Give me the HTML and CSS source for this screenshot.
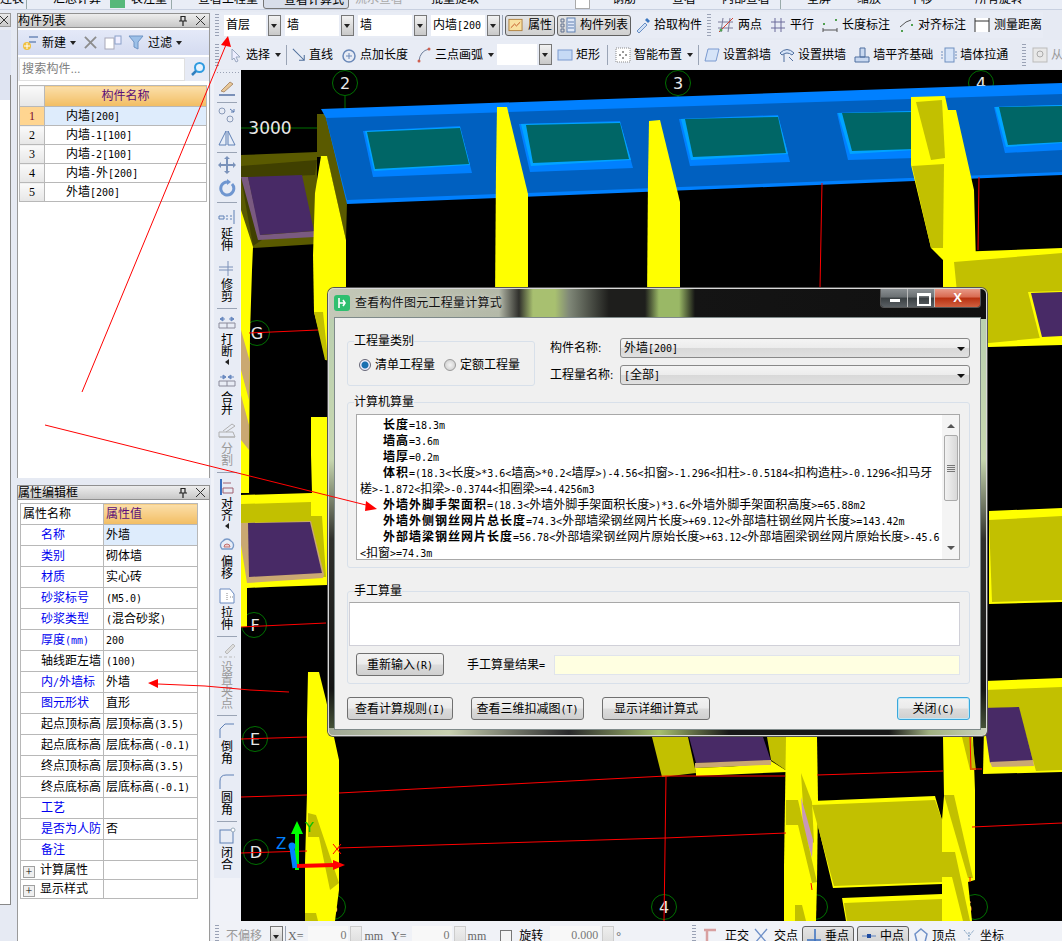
FILE: index.html
```html
<!DOCTYPE html>
<html lang="zh-CN">
<head>
<meta charset="utf-8">
<title>查看构件图元工程量计算式</title>
<link rel="stylesheet" href="styles.css">
</head>
<body>
<div class="app">
  <div class="topstrip">
    <span class="ts ts-a">连表</span><i class="ts-sep ts-s1"></i>
    <span class="ts ts-b">汇总计算</span>
    <svg class="ts-ico" width="17" height="14"><rect x="1" y="1" width="15" height="12" fill="#56b87a"/></svg>
    <span class="ts ts-c">表注量</span><i class="ts-sep ts-s2"></i>
    <span class="ts ts-d">查看工程量</span>
    <span class="ts ts-btn">查看计算式</span>
    <span class="ts ts-e">流水查看</span>
    <span class="ts ts-f">批量提取</span>
    <span class="ts-check"></span>
    <span class="ts ts-g">钢筋</span>
    <span class="ts ts-h">查看</span>
    <span class="ts ts-i">内部查看</span><i class="ts-sep ts-s3"></i>
    <span class="ts ts-j">全屏</span>
    <span class="ts ts-k">缩放</span>
    <span class="ts ts-l">平移</span>
    <span class="ts ts-m">所有旋转</span>
  </div>
  <div class="main">
    <div class="sliver">
      <div class="sliver-title"><svg width="8" height="8" viewBox="0 0 8 8"><path d="M0 0l8 8M8 0L0 8" stroke="#333"/></svg></div>
      <div class="sliver-tool"></div>
      <div class="sliver-body"></div>
    </div>
    <div class="leftcol">
      <section class="panel panel-list">
        <header class="ptitle"><span>构件列表</span><span class="ptitle-btns">
          <svg width="8" height="10" viewBox="0 0 8 10"><path d="M2 0v5M6 0v5M0 5h8M4 5v5" stroke="#222" stroke-width="1.2" fill="none"/><path d="M2 0h4" stroke="#222" stroke-width="2"/></svg>
          <svg width="9" height="9" viewBox="0 0 9 9"><path d="M0 0l9 9M9 0L0 9" stroke="#333"/></svg></span></header>
        <div class="ptool">
          <svg width="18" height="16" viewBox="0 0 18 16"><rect x="7" y="1" width="9" height="2" fill="#8aa0c8"/><rect x="7" y="6" width="7" height="2" fill="#8aa0c8"/><circle cx="5" cy="11" r="4" fill="#f0c040"/><path d="M2 11h6M5 8v6" stroke="#fff"/></svg>
          <span>新建</span><i class="caret"></i>
          <svg class="tool-x" width="13" height="13" viewBox="0 0 14 14"><path d="M1 1l12 12M13 1L1 13" stroke="#8d8d8d" stroke-width="2"/></svg>
          <svg class="tool-c" width="18" height="15" viewBox="0 0 18 15"><rect x="1" y="3" width="9" height="11" fill="#fff" stroke="#a8a8b8"/><rect x="11" y="1" width="6" height="8" fill="#eef" stroke="#8aa0c8"/></svg>
          <svg class="tool-f" width="16" height="15" viewBox="0 0 16 15"><path d="M1 1h14L10 7v7l-4-2V7z" fill="#9cc0e8" stroke="#6f94c4"/></svg>
          <span>过滤</span><i class="caret"></i>
        </div>
        <div class="psearch">
          <div class="search-input">搜索构件...</div>
          <svg width="16" height="16" viewBox="0 0 16 16"><circle cx="9.5" cy="6.5" r="4.5" fill="#e6f3ff" stroke="#2f9be0" stroke-width="2"/><path d="M6 10l-4 4" stroke="#2f7fc0" stroke-width="2.5"/></svg>
        </div>
        <table class="list">
          <tr class="hdr"><th class="num"></th><th class="lname">构件名称</th></tr>
          <tr class="sel"><td class="num">1</td><td class="nm">内墙<span class="m">[200]</span></td></tr>
          <tr><td class="num">2</td><td class="nm">内墙<span class="m">-1[100]</span></td></tr>
          <tr><td class="num">3</td><td class="nm">内墙<span class="m">-2[100]</span></td></tr>
          <tr><td class="num">4</td><td class="nm">内墙<span class="m">-</span>外<span class="m">[200]</span></td></tr>
          <tr><td class="num">5</td><td class="nm">外墙<span class="m">[200]</span></td></tr>
        </table>
      </section>
      <section class="panel panel-prop">
        <header class="ptitle"><span>属性编辑框</span><span class="ptitle-btns">
          <svg width="8" height="10" viewBox="0 0 8 10"><path d="M2 0v5M6 0v5M0 5h8M4 5v5" stroke="#222" stroke-width="1.2" fill="none"/><path d="M2 0h4" stroke="#222" stroke-width="2"/></svg>
          <svg width="9" height="9" viewBox="0 0 9 9"><path d="M0 0l9 9M9 0L0 9" stroke="#333"/></svg></span></header>
        <table class="prop">
          <tr class="hdr"><th class="pk0">属性名称</th><th class="pv0">属性值</th></tr>
          <tr class="sel"><td class="pk blue">名称</td><td class="pv">外墙</td></tr>
          <tr><td class="pk blue">类别</td><td class="pv">砌体墙</td></tr>
          <tr><td class="pk blue">材质</td><td class="pv">实心砖</td></tr>
          <tr><td class="pk blue">砂浆标号</td><td class="pv"><span class="m">(M5.0)</span></td></tr>
          <tr><td class="pk blue">砂浆类型</td><td class="pv"><span class="m">(</span>混合砂浆<span class="m">)</span></td></tr>
          <tr><td class="pk blue">厚度<span class="m">(mm)</span></td><td class="pv"><span class="m">200</span></td></tr>
          <tr><td class="pk">轴线距左墙</td><td class="pv"><span class="m">(100)</span></td></tr>
          <tr><td class="pk blue">内<span class="m">/</span>外墙标</td><td class="pv">外墙</td></tr>
          <tr><td class="pk blue">图元形状</td><td class="pv">直形</td></tr>
          <tr><td class="pk">起点顶标高</td><td class="pv">层顶标高<span class="m">(3.5)</span></td></tr>
          <tr><td class="pk">起点底标高</td><td class="pv">层底标高<span class="m">(-0.1)</span></td></tr>
          <tr><td class="pk">终点顶标高</td><td class="pv">层顶标高<span class="m">(3.5)</span></td></tr>
          <tr><td class="pk">终点底标高</td><td class="pv">层底标高<span class="m">(-0.1)</span></td></tr>
          <tr><td class="pk blue">工艺</td><td class="pv"></td></tr>
          <tr><td class="pk blue">是否为人防</td><td class="pv">否</td></tr>
          <tr><td class="pk blue">备注</td><td class="pv"></td></tr>
          <tr class="grp"><td class="pk"><i class="plus">+</i>计算属性</td><td class="pv"></td></tr>
          <tr class="grp"><td class="pk"><i class="plus">+</i>显示样式</td><td class="pv"></td></tr>
        </table>
      </section>
    </div>
    <div class="rightcol">
      <div class="tbrow tbrow1">
        <div class="tb tb1">
          <i class="grip"></i>
          <div class="combo c-a"><span>首层</span><i class="cbtn"></i></div>
          <div class="combo c-b"><span>墙</span><i class="cbtn"></i></div>
          <div class="combo c-b"><span>墙</span><i class="cbtn"></i></div>
          <div class="combo c-c"><span>内墙<b class="m">[200</b></span><i class="cbtn"></i></div>
          <i class="tsep"></i>
          <div class="tool on t-attr"><svg width="16" height="16" viewBox="0 0 16 16"><rect x="1" y="2" width="14" height="12" fill="#f8e0a0" stroke="#b08040"/><path d="M3 11l4-4 2 2 4-4" stroke="#c05020" fill="none"/></svg><span>属性</span></div>
          <div class="tool on t-list"><svg width="16" height="16" viewBox="0 0 16 16"><path d="M1 2h3v3H1zM1 7h3v3H1zM1 12h3v3H1z" fill="none" stroke="#607090"/><rect x="7" y="1" width="8" height="14" fill="#dfe8f8" stroke="#6080b0"/><path d="M8 5h6M8 8h6M8 11h6" stroke="#6080b0"/></svg><span>构件列表</span></div>
          <div class="tool t-pick"><svg width="16" height="16" viewBox="0 0 16 16"><path d="M2 14l8-8 2 2-8 8z" fill="#cfe0f5" stroke="#6a8fc5"/><path d="M10 3l3 3 2-2-3-3z" fill="#3a76c0"/></svg><span>拾取构件</span></div>
        </div>
        <div class="tb tb1b">
          <i class="grip"></i>
          <div class="tool"><svg width="16" height="16" viewBox="0 0 16 16"><path d="M5 1L3 15M12 1l-2 14M0 5h15M0 11h15" stroke="#7a7a9a"/><path d="M1 15L15 1" stroke="#d04030"/><circle cx="3" cy="13" r="1.5" fill="#50a050"/></svg><span>两点</span></div>
          <div class="tool"><svg width="16" height="16" viewBox="0 0 16 16"><path d="M5 1v14M11 1v14M1 5h14M1 11h14" stroke="#6a6a9a"/></svg><span>平行</span></div>
          <div class="tool"><svg width="16" height="16" viewBox="0 0 16 16"><rect x="1" y="6" width="2" height="2" fill="#50a050"/><rect x="13" y="2" width="2" height="2" fill="#50a050"/><path d="M1 11v4M15 11v4M1 13h14" stroke="#555"/></svg><span>长度标注</span></div>
          <div class="tool"><svg width="16" height="16" viewBox="0 0 16 16"><path d="M2 10l6-5 5-2" stroke="#555" fill="none"/><rect x="3" y="13" width="2" height="2" fill="#50a050"/><rect x="13" y="7" width="2" height="2" fill="#50a050"/></svg><span>对齐标注</span></div>
          <div class="tool"><svg width="16" height="16" viewBox="0 0 16 16"><rect x="1" y="1" width="14" height="14" fill="#fff"/><path d="M1 1v14M15 1v14M1 4h14" stroke="#333"/></svg><span>测量距离</span></div>
        </div>
      </div>
      <div class="tbrow tbrow2">
        <div class="tb tb2">
          <i class="grip"></i>
          <div class="tool"><svg width="14" height="16" viewBox="0 0 14 16"><path d="M3 2l8 8H7l2 4-2 1-2-4-2 2z" fill="#eef" stroke="#9aa8c0"/></svg><span>选择</span><i class="caret"></i></div>
          <i class="tsep n"></i>
          <div class="tool"><svg width="14" height="16" viewBox="0 0 16 16"><path d="M1 1l13 13M14 8v6H8" stroke="#50709c" fill="none" stroke-width="1.2"/></svg><span>直线</span></div>
          <div class="tool"><svg width="16" height="16" viewBox="0 0 16 16"><circle cx="8" cy="9" r="6" fill="none" stroke="#6a88b8" stroke-width="1.5"/><path d="M8 6v6M5 9h6" stroke="#6a88b8"/></svg><span>点加长度</span></div>
          <div class="tool"><svg width="16" height="16" viewBox="0 0 14 16"><path d="M2 14Q3 4 12 2" fill="none" stroke="#70809c"/><circle cx="2" cy="14" r="1.5" fill="#d06050"/><circle cx="12" cy="2" r="1.5" fill="#d06050"/></svg><span>三点画弧</span><i class="caret"></i></div>
          <div class="combo c-d"><span></span><i class="cbtn"></i></div>
          <div class="tool t-rect"><svg width="16" height="16" viewBox="0 0 16 16"><rect x="1" y="3" width="14" height="10" fill="#c6daf5" stroke="#7a9ad0"/></svg><span>矩形</span></div>
          <i class="tsep"></i>
          <div class="tool t-smart"><svg width="16" height="16" viewBox="0 0 16 16"><rect x="1" y="1" width="14" height="14" fill="#fff" stroke="#8a8a8a" stroke-dasharray="1 1"/><path d="M8 4v2M8 10v2M4 8h2M10 8h2" stroke="#333"/></svg><span>智能布置</span><i class="caret"></i></div>
          <i class="tsep n"></i>
          <div class="tool"><svg width="16" height="16" viewBox="0 0 16 16"><path d="M4 2h11l-3 12H1z" fill="#d6e4f8" stroke="#7a9ad0"/></svg><span>设置斜墙</span></div>
          <div class="tool"><svg width="16" height="16" viewBox="0 0 16 16"><path d="M1 6q7-7 14 0l-2 2q-5-4-10 0z" fill="#d6e4f8" stroke="#4f6f9f"/><path d="M5 7v8M10 10l4 4" stroke="#4f6f9f"/></svg><span>设置拱墙</span></div>
          <div class="tool"><svg width="16" height="16" viewBox="0 0 16 16"><path d="M6 1h5v9H6zM1 10h14v5H1z" fill="#c8d8f0" stroke="#4f6f9f"/></svg><span>墙平齐基础</span></div>
          <div class="tool"><svg width="16" height="16" viewBox="0 0 16 16"><rect x="4" y="1" width="9" height="14" fill="#d6e4f8" stroke="#6f8fc0"/><path d="M1 4v8M15 4v8" stroke="#6f8fc0" stroke-dasharray="2 1"/></svg><span>墙体拉通</span></div>
        </div>
        <div class="tb tb2b">
          <i class="grip"></i>
          <div class="tool dim"><svg width="16" height="16" viewBox="0 0 16 16"><rect x="1" y="1" width="14" height="14" fill="#e8e8e8" stroke="#bbb"/><circle cx="8" cy="7" r="3" fill="none" stroke="#aaa"/></svg><span>从</span></div>
        </div>
      </div>
      <div class="work">
        <nav class="vbar">
          <i class="vgrip"></i>
          <div class="vi"><svg width="18" height="18" viewBox="0 0 18 18"><path d="M3 12l9-9 3 2-9 8z" fill="#e8c898" stroke="#b09070"/><path d="M1 16h16" stroke="#7a90b8" stroke-width="2"/></svg></div>
          <i class="vsep"></i>
          <div class="vi"><svg width="18" height="18" viewBox="0 0 18 18"><circle cx="4" cy="5" r="3" fill="none" stroke="#8a9ab8"/><circle cx="12" cy="13" r="3" fill="none" stroke="#8a9ab8"/><path d="M12 3l4 3M16 3v3h-3" stroke="#5a7ab0" fill="none"/></svg></div>
          <div class="vi"><svg width="18" height="18" viewBox="0 0 18 18"><path d="M8 2v14H1zM10 2v14h7z" fill="#e8eef8" stroke="#5f80b5"/></svg></div>
          <i class="vsep"></i>
          <div class="vi"><svg width="18" height="18" viewBox="0 0 18 18"><path d="M9 1v16M1 9h16" stroke="#7a92ba" stroke-width="2"/><path d="M9 0l-3 3h6zM9 18l-3-3h6zM0 9l3-3v6zM18 9l-3-3v6z" fill="#7a92ba"/></svg></div>
          <div class="vi"><svg width="18" height="18" viewBox="0 0 18 18"><path d="M14 5a6.5 6.5 0 1 1-5-2" fill="none" stroke="#6f96d0" stroke-width="3"/><path d="M9 0l4 3-4 3z" fill="#6f96d0"/></svg></div>
          <i class="vsep"></i>
          <div class="vi lab"><svg width="18" height="18" viewBox="0 0 18 18"><path d="M1 8h5v3H1zM8 8h2M8 11h2M12 8h2M12 11h2M16 2v14" stroke="#5f80b5" fill="none"/></svg><span>延</span><span>伸</span></div>
          <div class="vi lab"><svg width="18" height="18" viewBox="0 0 18 18"><path d="M1 8h14M1 11h14M10 2v15" stroke="#7a90b8" fill="none"/></svg><span>修</span><span>剪</span></div>
          <i class="vsep"></i>
          <div class="vi lab"><svg width="18" height="18" viewBox="0 0 18 18"><path d="M2 5h5M16 5h-5M2 5l3-2v4zM16 5l-3-2v4z" stroke="#6a8ac0" fill="#6a8ac0"/><path d="M1 9h16v5H1zM9 9v5" fill="none" stroke="#8a8a9a"/></svg><span>打</span><span>断</span><i class="tri"></i></div>
          <div class="vi lab"><svg width="18" height="18" viewBox="0 0 18 18"><path d="M8 5H2M10 5h6M8 5L5 3v4zM10 5l3-2v4z" stroke="#6a8ac0" fill="#6a8ac0"/><path d="M1 9h16v5H1zM9 9v5" fill="none" stroke="#8a8a9a"/></svg><span>合</span><span>并</span></div>
          <div class="vi lab dim"><svg width="18" height="18" viewBox="0 0 18 18"><path d="M1 9h14l2 5H1zM1 14h16M5 8l9-7 3 2-9 6" fill="none" stroke="#b0b0b0"/></svg><span>分</span><span>割</span></div>
          <i class="vsep"></i>
          <div class="vi lab"><svg width="18" height="18" viewBox="0 0 18 18"><path d="M3 1v16" stroke="#3a70c0" stroke-width="2"/><path d="M5 5h8M5 10h10v5H5z" stroke="#a06070" fill="none"/></svg><span>对</span><span>齐</span><i class="tri"></i></div>
          <div class="vi lab"><svg width="18" height="18" viewBox="0 0 18 18"><path d="M4 13a5 5 0 0 1 1-8 5 5 0 0 1 8 0 5 5 0 0 1 1 8z" fill="#e8eef8" stroke="#7a9ac8" stroke-width="1.4"/><path d="M6 11a3 3 0 0 1 6 0z" fill="#f0d0d0" stroke="#c07070"/></svg><span>偏</span><span>移</span></div>
          <div class="vi lab"><svg width="18" height="18" viewBox="0 0 18 18"><path d="M2 2h10l4 5v9H2z" fill="#fff" stroke="#6a8ac0"/><path d="M9 6v8M12 10h3" stroke="#888" stroke-dasharray="1 1"/></svg><span>拉</span><span>伸</span></div>
          <i class="vsep"></i>
          <div class="vi lab dim"><svg width="18" height="18" viewBox="0 0 18 18"><path d="M7 10l8-8 2 2-8 8z" fill="#ddd" stroke="#bbb"/><path d="M1 15h16" stroke="#bbb" stroke-dasharray="3 2"/></svg><span>设</span><span>置</span><span>夹</span><span>点</span></div>
          <i class="vsep"></i>
          <div class="vi lab"><svg width="18" height="18" viewBox="0 0 18 18"><path d="M2 17V8l5-5h9" fill="none" stroke="#5f80b5"/></svg><span>倒</span><span>角</span></div>
          <div class="vi lab"><svg width="18" height="18" viewBox="0 0 18 18"><path d="M2 17V9q0-6 6-6h8" fill="none" stroke="#5f80b5"/></svg><span>圆</span><span>角</span></div>
          <i class="vsep"></i>
          <div class="vi lab"><svg width="18" height="18" viewBox="0 0 18 18"><rect x="2" y="3" width="13" height="13" fill="none" stroke="#5f80b5"/><circle cx="15" cy="3" r="2" fill="#fff" stroke="#9ab"/></svg><span>闭</span><span>合</span></div>
        </nav>
        <svg class="canvas" width="821" height="851" viewBox="241 70 821 851">
          <rect x="241" y="70" width="821" height="851" fill="#000"/>
          <!-- axis markers sit behind the model -->
          <g class="axis">
            <circle cx="345" cy="83" r="12.5"/><path d="M345,96 V109"/>
            <circle cx="678" cy="83" r="12.5"/><path d="M678,96 V100"/>
            <circle cx="981" cy="83" r="12.5"/>
            <path d="M241,128 H322"/>
            <circle cx="257" cy="333" r="12.5"/>
            <circle cx="254" cy="625" r="12.5"/>
            <circle cx="255" cy="739" r="12.5"/>
            <circle cx="256" cy="852" r="12.5"/>
            <circle cx="333" cy="907" r="12.5"/>
            <circle cx="664" cy="907" r="12.5"/>
            <circle cx="815" cy="907" r="12.5"/>
            <circle cx="975" cy="907" r="12.5"/>
          </g>
          <g class="lbl">
            <text x="345" y="89">2</text><text x="678" y="89">3</text><text x="981" y="89">4</text>
            <text class="big" x="270" y="134">3000</text>
            <text x="257" y="339">G</text><text x="255" y="631">F</text><text x="255" y="745">E</text><text x="256" y="858">D</text>
            <text x="333" y="913">3</text><text x="664" y="913">4</text><text x="812" y="913">5</text><text x="967" y="913">6</text>
          </g>
          <!-- beam -->
          <polygon class="o" points="317,114 327,114 347,202 346,240 327,157 317,157"/>
          <polygon class="b1" points="321,109 1062,83 1062,175 347,204 326,118"/>
          <polygon class="b2" points="326,118 1062,94 1062,172 347,200"/>
          <g>
            <polygon class="b1" points="363,131 460,126 472,173 373,177"/><polygon class="b3" points="365,131 460,127 470,165 374,171"/><polygon class="t" points="367,132 460,128 469,164 375,169"/>
            <polygon class="b1" points="519,124 620,121 633,168 530,172"/><polygon class="b3" points="521,124 620,122 631,160 531,166"/><polygon class="t" points="526,125 620,123 629,159 533,163"/>
            <polygon class="b1" points="679,119 778,115 790,162 690,166"/><polygon class="b3" points="681,119 778,116 788,154 691,160"/><polygon class="t" points="685,119 778,117 786,153 693,157"/>
            <polygon class="b1" points="837,113 915,111 915,158 848,160"/><polygon class="b3" points="838,113 915,111 915,150 850,154"/><polygon class="t" points="842,113 915,112 915,149 852,151"/>
            <polygon class="b1" points="994,107 1062,105 1062,150 1005,153"/><polygon class="b3" points="995,107 1062,105 1062,143 1006,147"/><polygon class="t" points="999,107 1062,106 1062,142 1008,145"/>
          </g>
          <!-- columns over beam -->
          <polygon class="y" points="497,107 507,107 528,194 528,300 495,300 496,168"/>
          <polygon class="y" points="649,121 660,120 680,202 680,300 647,300 648,178"/>
          <polygon class="y" points="911,97 945,96 948,110 956,110 974,190 977,300 943,300 943,260 931,248 911,165"/>
          <polygon class="d" points="916,102 942,100 945,158 931,160"/>
          <polygon class="d" points="912,166 944,164 943,248 931,248"/>
          <!-- first bay upper left -->
          <polygon class="o" points="241,155 317,152 317,244 252,248 241,215"/>
          <polygon class="o2" points="241,166 317,160 315,175 241,178"/>
          <polygon class="o2" points="241,178 248,177 262,240 253,246"/>
          <polygon class="l" points="241,177 248,177 261,235 315,231 315,237 258,240"/>
          <polygon class="p" points="248,177 302,175 314,231 260,235"/>
          <polygon class="y" points="321,156 327,156 346,240 346,300 328,365 314,312 313,255 315,193"/>
          <polygon class="d" points="314,312 323,312 328,360 325,360"/>
          <polygon class="y" points="241,210 253,247 252,270 250,333 249,493 241,493"/>
          <polygon class="s" points="241,330 250,362 249,400 241,370"/>
          <polygon class="s" points="241,395 249,425 249,450 241,440"/>
          <!-- right bays -->
          <polygon class="y" points="954,252 1062,248 1062,345 989,347 962,347"/>
          <polygon class="d" points="954,262 1062,253 1062,337 1040,338 989,343 962,343"/>
          <polygon class="y" points="1028,292 1062,291 1062,339 1040,339"/>
          <polygon class="p" points="1031,293 1062,292 1062,336 1042,337"/>
          <polygon class="y" points="989,511 1062,508 1062,602 989,604"/>
          <polygon class="d" points="989,520 1062,516 1062,600 992,602"/>
          <polygon class="y" points="985,681 1062,678 1062,772 983,774"/>
          <polygon class="d" points="985,690 1062,687 1062,770 1036,771 1018,707 985,709"/>
          <polygon class="p" points="982,708 1019,707 1033,761 990,763"/>
          <polygon class="s" points="990,762 1033,760 1034,766 992,767"/>
          <!-- F bay -->
          <polygon class="y" points="311,417 327,417 327,585 270,587 247,588 247,627 241,627 241,495 312,493 311,455"/>
          <polygon class="d" points="241,504 311,502 311,516 322,516 326,577 323,577 310,522 241,523"/>
          <polygon class="s" points="241,523 311,521 324,574 323,578 247,583 241,545"/>
          <polygon class="p" points="248,523 310,522 322,573 249,577"/>
          <!-- lower left column -->
          <polygon class="y" points="308,672 319,672 326,700 339,760 339,890 335,921 305,921 305,863 307,793 307,720"/>
          <polygon class="d" points="308,813 316,815 339,883 330,890 319,837 308,837"/>
          <polygon class="d" points="305,913 316,913 318,921 305,921"/>
          <!-- lower middle -->
          <polygon class="d" points="652,737 688,737 696,773 662,777"/>
          <polygon class="y" points="696,773 771,761 787,771 787,772 696,776"/>
          <polygon class="d" points="767,737 787,737 787,771 771,760"/>
          <polygon class="p" points="689,737 763,737 771,761 696,763"/>
          <polygon class="s" points="695,763 771,760 771,765 695,768"/>
          <polygon class="y" points="695,768 771,765 787,771 696,774"/>
          <polygon class="y" points="786,737 817,737 818,800 817,883 816,921 784,921 784,866 785,799"/>
          <polygon class="d" points="801,773 812,802 814,843 805,836"/>
          <polygon class="pk" points="801,797 808,822 813,840 812,858 803,826"/>
          <polygon class="d" points="786,800 798,800 817,882 812,883 798,825 786,825"/>
          <polygon class="d" points="795,905 802,905 806,921 795,921"/>
          <polygon class="y" points="812,801 935,796 942,820 942,884 833,888"/>
          <polygon class="d" points="812,805 935,800 942,820 942,882 834,886"/>
          <polygon class="y" points="842,898 942,894 942,921 846,921"/>
          <polygon class="d" points="844,903 942,899 942,921 847,921"/>
          <polygon class="y" points="943,737 973,737 975,790 975,880 968,882 972,921 942,921 942,820 944,796"/>
          <polygon class="d" points="944,795 954,795 973,878 968,878"/>
          <polygon class="d" points="942,852 955,852 970,921 963,921 952,877 942,877"/>
          <polygon class="d" points="962,737 972,737 976,770 970,770"/>
          <!-- grid lines -->
          <g class="red">
            <path d="M249,333 L318,330"/><path d="M241,627 L326,623"/><path d="M241,739 L307,737"/>
            <path d="M241,797 L307,795 M339,793 L666,776 L785,776 M817,775 L943,771 M972,769 L982,769"/>
            <path d="M241,853 L307,851 M338,848 L665,838 L786,833 M972,827 L1062,823"/>
            <path d="M822,183 L820,288"/><path d="M979,177 L978,250"/>
            <path d="M666,776 L664,921"/>
            <path d="M333,844 L341,854 M341,844 L333,854"/>
            <path d="M811,883 L812,890 M970,877 L970,882 M970,735 L971,770"/>
          </g>
          <!-- gizmo -->
          <path d="M297,870 V832" stroke="#00ff00" stroke-width="4"/><polygon points="297,821 291,834 303,834" fill="#00ff00"/>
          <path d="M295,868 L292,848" stroke="#0080ff" stroke-width="5"/><circle cx="292" cy="846" r="3.5" fill="#0080ff"/>
          <path d="M297,866 L335,865" stroke="#ff0000" stroke-width="4"/><polygon points="345,865 333,860 333,870" fill="#ff0000"/>
          <text class="gz" x="276" y="849">Z</text><text class="gy" x="305" y="832">Y</text>
        </svg>
      </div>
      <div class="status">
        <div class="tb st1">
          <i class="grip"></i>
          <div class="combo c-s dim"><span>不偏移</span><i class="cbtn"></i></div>
          <i class="tsep"></i>
          <span class="dim2 s-x">X=</span><span class="num-in">0</span><i class="spin"></i><span class="dim2">mm</span>
          <span class="dim2 s-y">Y=</span><span class="num-in">0</span><i class="spin"></i><span class="dim2">mm</span>
          <i class="chk"></i><span class="s-r">旋转</span>
          <span class="num-in n2">0.000</span><i class="spin"></i><span class="dim2">°</span>
        </div>
        <div class="tb st2">
          <i class="grip"></i>
          <div class="tool wg"><svg width="16" height="16" viewBox="0 0 16 16"><path d="M1 2h12M4 2v13" stroke="#d8a0a0" stroke-width="2.5" fill="none"/></svg><span>正交</span></div>
          <div class="tool wg"><svg width="14" height="16" viewBox="0 0 14 16"><path d="M1 1l12 14M13 1L1 15" stroke="#6f90c8" stroke-width="1.3"/></svg><span>交点</span></div>
          <div class="tool on"><svg width="16" height="16" viewBox="0 0 16 16"><path d="M1 12h14M9 1v13" stroke="#3a70c0" stroke-width="1.5"/></svg><span>垂点</span></div>
          <div class="tool on"><svg width="16" height="16" viewBox="0 0 16 16"><path d="M1 8h14" stroke="#5a80c0"/><rect x="6" y="6" width="4" height="4" fill="#204ca0"/></svg><span>中点</span></div>
          <div class="tool"><svg width="16" height="16" viewBox="0 0 16 16"><path d="M8 1l6 5-2 8H4L2 6z" fill="none" stroke="#6f90c8" stroke-width="1.5"/></svg><span>顶点</span></div>
          <div class="tool"><svg width="16" height="16" viewBox="0 0 16 16"><path d="M8 4v11M3 2l5 6 5-6" stroke="#80a0c0" fill="none" stroke-dasharray="2 1"/></svg><span>坐标</span></div>
        </div>
      </div>
    </div>
  </div>

  <div class="dialog">
    <div class="dtitle">
      <svg width="16" height="16" viewBox="0 0 16 16"><rect width="16" height="16" rx="3" fill="#2fbf6f"/><path d="M5 3v10M5 8h6M9 5l2 3-2 3" stroke="#fff" stroke-width="1.6" fill="none"/></svg>
      <span class="dtitle-t">查看构件图元工程量计算式</span>
      <div class="wbtns"><i class="wb wb-min"></i><i class="wb wb-max"></i><i class="wb wb-close">X</i></div>
    </div>
    <div class="dbody">
      <div class="d-top">
        <fieldset class="grp g-type"><legend>工程量类别</legend>
          <label class="radio"><i class="rd rd-on"></i>清单工程量</label>
          <label class="radio"><i class="rd"></i>定额工程量</label>
        </fieldset>
        <div class="d-sel">
          <div class="d-selrow"><span class="d-sellab">构件名称:</span><div class="dd">外墙<span class="m">[200]</span><i class="ddarrow"></i></div></div>
          <div class="d-selrow"><span class="d-sellab">工程量名称:</span><div class="dd"><span class="m">[</span>全部<span class="m">]</span><i class="ddarrow"></i></div></div>
        </div>
      </div>
      <fieldset class="grp g-calc"><legend>计算机算量</legend>
        <div class="calcbox">
          <div class="calctext">
            <p><b>长度</b><span class="m">=18.3m</span></p>
            <p><b>墙高</b><span class="m">=3.6m</span></p>
            <p><b>墙厚</b><span class="m">=0.2m</span></p>
            <p><b>体积</b><span class="m">=(18.3&lt;</span>长度<span class="m">&gt;*3.6&lt;</span>墙高<span class="m">&gt;*0.2&lt;</span>墙厚<span class="m">&gt;)-4.56&lt;</span>扣窗<span class="m">&gt;-1.296&lt;</span>扣柱<span class="m">&gt;-0.5184&lt;</span>扣构造柱<span class="m">&gt;-0.1296&lt;</span>扣马牙<br>槎<span class="m">&gt;-1.872&lt;</span>扣梁<span class="m">&gt;-0.3744&lt;</span>扣圈梁<span class="m">&gt;=4.4256m3</span></p>
            <p><b>外墙外脚手架面积</b><span class="m">=(18.3&lt;</span>外墙外脚手架面积长度<span class="m">&gt;)*3.6&lt;</span>外墙外脚手架面积高度<span class="m">&gt;=65.88m2</span></p>
            <p><b>外墙外侧钢丝网片总长度</b><span class="m">=74.3&lt;</span>外部墙梁钢丝网片长度<span class="m">&gt;+69.12&lt;</span>外部墙柱钢丝网片长度<span class="m">&gt;=143.42m</span></p>
            <p><b>外部墙梁钢丝网片长度</b><span class="m">=56.78&lt;</span>外部墙梁钢丝网片原始长度<span class="m">&gt;+63.12&lt;</span>外部墙圈梁钢丝网片原始长度<span class="m">&gt;-45.6</span><br><span class="m">&lt;</span>扣窗<span class="m">&gt;=74.3m</span></p>
          </div>
          <div class="scroll"><i class="sb-up"></i><i class="sb-thumb"></i><i class="sb-down"></i></div>
        </div>
      </fieldset>
      <fieldset class="grp g-man"><legend>手工算量</legend>
        <div class="mantext"></div>
        <div class="manrow">
          <button class="btn b-re">重新输入<span class="m">(R)</span></button>
          <span class="manlab">手工算量结果<span class="m">=</span></span>
          <div class="manres"></div>
        </div>
      </fieldset>
      <div class="d-foot">
        <button class="btn b-1">查看计算规则<span class="m">(I)</span></button>
        <button class="btn b-2">查看三维扣减图<span class="m">(T)</span></button>
        <button class="btn b-3">显示详细计算式</button>
        <button class="btn b-close">关闭<span class="m">(C)</span></button>
      </div>
    </div>
  </div>

  <svg class="notes" width="1062" height="941" viewBox="0 0 1062 941">
    <path d="M82,392 L228,40"/><polygon points="228,36 221,45 231,47"/>
    <path d="M45,425 L370,506"/><polygon points="377,509 366,501 365,511"/>
    <path d="M158,684 L205,686 L250,690 L289,692"/><polygon points="148,683 158,679 158,688"/>
  </svg>
</div>
</body>
</html>
```
FILE: styles.css
```css
* { box-sizing: border-box; }
html, body { margin: 0; padding: 0; }
body { width: 1062px; height: 941px; overflow: hidden; font: 12px/14px "Liberation Serif", "Noto Sans CJK SC", serif; color: #000; }
i { font-style: normal; display: block; }
.m { font: 400 10px/1 "DejaVu Sans Mono", monospace; }
.app { position: relative; width: 1062px; height: 941px; overflow: hidden; display: flex; flex-direction: column; background: #e6eaf3; }

/* clipped top strip */
.topstrip { height: 10px; flex: none; display: flex; align-items: flex-end; overflow: hidden; background: #e9edf6; border-bottom: 1px solid #c8d0e0; }
.ts { flex: none; height: 20px; line-height: 20px; white-space: nowrap; }
.ts-sep { flex: none; width: 1px; height: 10px; background: #9aa; }
.ts-ico { flex: none; margin-left: 8px; }
.ts-a { width: 26px; }
.ts-s1 { margin-right: 26px; }
.ts-b { width: 48px; }
.ts-c { width: 40px; margin-left: 5px; }
.ts-s2 { margin-right: 26px; }
.ts-d { width: 62px; }
.ts-btn { width: 86px; margin-left: 3px; padding-left: 20px; border: 1px solid #777; border-radius: 3px; background: #d8deea; }
.ts-e { width: 60px; margin-left: 6px; color: #aaa; }
.ts-f { width: 68px; margin-left: 16px; }
.ts-check { flex: none; width: 15px; height: 10px; margin-left: 76px; border: 1px solid #aaa; background: #fff; }
.ts-g { margin-left: 22px; width: 28px; }
.ts-h { margin-left: 32px; width: 28px; }
.ts-i { margin-left: 22px; width: 50px; }
.ts-s3 { margin-left: 8px; }
.ts-j { margin-left: 26px; width: 28px; }
.ts-k { margin-left: 22px; width: 28px; }
.ts-l { margin-left: 24px; width: 28px; }
.ts-m { margin-left: 38px; width: 50px; }

.main { flex: 1; display: flex; min-height: 0; }

/* sliver on the far left */
.sliver { width: 17px; flex: none; display: flex; flex-direction: column; padding-top: 3px; }
.sliver-title { height: 14px; width: 11px; padding-top: 2px; background: linear-gradient(#e8e8e8, #c9c9c9); border: 1px solid #999; border-left: 0; }
.sliver-title svg { display: block; }
.sliver-tool { height: 45px; width: 11px; margin-top: 3px; background: #dfe4f2; }
.sliver-body { height: 830px; width: 11px; border-right: 1px solid #888; border-bottom: 1px solid #888; background: linear-gradient(#dfe4f2 0, #dfe4f2 25px, #fff 25px); }

/* left column */
.leftcol { width: 193px; flex: none; display: flex; flex-direction: column; padding-top: 3px; }
.panel { background: #fff; border-left: 1px solid #9a9a9a; border-right: 1px solid #9a9a9a; display: flex; flex-direction: column; }
.panel-list { height: 465px; }
.panel-prop { margin-top: 7px; flex: 1; }
.ptitle { height: 15px; flex: none; margin: 0 -1px; display: flex; justify-content: space-between; align-items: center; background: linear-gradient(#ededed, #c8c8c8); border: 1px solid #909090; }
.ptitle-btns { display: flex; align-items: center; gap: 9px; padding-right: 4px; }

.ptool { height: 25px; margin-top: 2px; flex: none; display: flex; align-items: center; padding-left: 4px; gap: 2px; background: linear-gradient(#e4e9f8, #d4dbf0); }
.caret { flex: none; width: 0; height: 0; border: 3px solid transparent; border-top: 4px solid #222; border-bottom: 0; margin-left: 2px; }
.tool-x { margin-left: 6px; }
.tool-c { margin-left: 5px; }
.tool-f { margin-left: 4px; margin-right: 2px; }
.psearch { height: 24px; flex: none; display: flex; align-items: center; gap: 5px; padding-left: 1px; margin-top: 2px; background: #e6eaf5; }
.search-input { width: 166px; height: 23px; background: #fff; border: 1px solid #e0e0e0; color: #808080; line-height: 21px; padding-left: 2px; font-size: 12px; letter-spacing: .2px; }

table { border-collapse: collapse; table-layout: fixed; }
.list { width: 188px; margin: 4px 0 0 1px; }
.list th, .list td { border: 1px solid #b8b8b8; padding: 0; height: 19px; font-weight: 400; }
.list .hdr th { height: 21px; }
.hdr th { background: linear-gradient(#fbdfaa, #f2bd62); color: #5c0f78; }
.list .hdr .num, .num { background: linear-gradient(#fafafa, #e6e6e6); width: 25px; text-align: center; }
.list .sel .num { background: #ffd590; color: #7a0a30; }
.sel .nm, .sel .pv { background: #deecfc; }
.nm { padding-left: 21px !important; white-space: nowrap; }

.prop { width: 178px; margin: 3px 0 0 2px; }
.prop th, .prop td { border: 1px solid #b8b8b8; height: 21px; padding: 0; font-weight: 400; white-space: nowrap; overflow: hidden; }
.prop .grp td { height: 19px; }
.prop .pk0 { width: 83px; background: #fff; color: #000; text-align: left; padding-left: 2px; }
.prop .pv0 { text-align: left; padding-left: 2px; }
.pk { padding-left: 20px !important; }
.blue { color: #0000f0; }
.pv { padding-left: 2px !important; }
.grp .pk { padding-left: 2px !important; }
.plus { display: inline-block; width: 12px; height: 12px; margin-right: 5px; line-height: 10px; text-align: center; border: 1px solid #a0a0a0; background: #f0f0f0; vertical-align: -2px; }

/* right column */
.rightcol { flex: 1; min-width: 0; margin-left: 1px; display: flex; flex-direction: column; }
.tbrow { display: flex; flex: none; }
.tbrow1 { height: 30px; padding-top: 2px; }
.tbrow2 { height: 30px; }
.tb { display: flex; align-items: center; flex: none; }
.tb1 { width: 496px; height: 26px; padding-left: 4px; background: #e8ecf5; }
.tb1b { width: 336px; height: 26px; background: #e8ecf5; gap: 6px; }
.tb2 { width: 799px; height: 29px; padding-left: 4px; gap: 6px; background: #e8ecf5; }
.tb2b { margin-left: 12px; height: 29px; flex: 1; min-width: 0; overflow: hidden; background: #e8ecf5; }
.grip { flex: none; width: 4px; height: 22px; margin-right: 5px; background: repeating-linear-gradient(#9aa2b5 0 1px, transparent 1px 3px); }
.tb2 .grip { margin-right: 3px; }
.tb1b .grip { margin-right: 0; }
.tsep { flex: none; width: 1px; height: 20px; background: #9aa4b5; }
.tsep.n { margin: 0 -2px; }
.tb1 .tsep { margin: 0 2px; }
.combo { display: flex; flex: none; gap: 2px; height: 21px; align-items: center; }
.combo span { background: #fff; height: 21px; line-height: 21px; padding-left: 2px; overflow: hidden; white-space: nowrap; }
.cbtn { flex: none; width: 13px; height: 21px; border: 1px solid #777; background: linear-gradient(#f2f2f2, #c8c8c8); position: relative; }
.cbtn::after { content: ""; position: absolute; left: 2px; top: 8px; border: 3px solid transparent; border-top: 4px solid #222; border-bottom: 0; }
.c-a { margin-right: 4px; }
.c-a span { width: 42px; }
.c-b { margin-right: 4px; }
.c-b span { width: 54px; }
.c-c span { width: 54px; }
.c-d span { width: 40px; }
.c-d { margin-left: -4px; }
.tool { flex: none; display: flex; align-items: center; gap: 3px; white-space: nowrap; height: 21px; padding: 0 1px; }
.tb1b .tool { gap: 4px; }
.tool.on { border: 1px solid #606060; border-radius: 3px; padding: 0 2px; background: linear-gradient(#e4e4e4, #d0d0d0); }
.t-attr { width: 50px; gap: 5px !important; }
.t-list { width: 74px; margin-left: 2px; gap: 4px !important; }
.t-pick { margin-left: 3px; }
.t-rect { margin-left: -2px; }
.dim { color: #999; }

/* workspace */
.work { flex: 1; display: flex; min-height: 0; background: #f0f2f8; }
.vbar { width: 30px; flex: none; padding-left: 3px; height: 807px; display: flex; flex-direction: column; }
.vbar > * { width: 26px; background: #e8ecf5; }
.vgrip { height: 7px; flex: none; background: repeating-linear-gradient(90deg, #9aa2b5 0 1px, #e8ecf5 1px 3px) 0 2px / 100% 1px no-repeat #e8ecf5; }
.vi { flex: none; display: flex; flex-direction: column; align-items: center; padding: 2px 0; }
.vi svg { margin-bottom: 1px; flex: none; }
.vi.lab { padding: 0 0 7px; }
.vi.lab svg { margin-bottom: 2px; }
.vi span { display: block; line-height: 12px; height: 12px; font-size: 12px; }
.vsep { height: 4px; flex: none; position: relative; }
.vsep::after { content: ""; position: absolute; left: 3px; right: 3px; top: 2px; height: 1px; background: #9aa4b5; }
.vi.lab + .vsep { margin-top: -4px; background: transparent; }
.vsep + .lab { padding-top: 4px; }
.tri { width: 0; height: 0; flex: none; border: 3px solid transparent; border-right: 4px solid #222; border-left: 0; margin-top: 1px; }
.canvas { flex: none; display: block; }
.y { fill: #ffff00; } .d { fill: #c2c000; } .o { fill: #5a5a00; } .o2 { fill: #404000; }
.p { fill: #482a66; } .s { fill: #caa872; } .l { fill: #7a5a80; } .pk { fill: #c898b8; }
.b1 { fill: #0080ff; } .b2 { fill: #0060c0; } .b3 { fill: #00a4ff; } .t { fill: #006666; }
.red path { stroke: #ff0000; stroke-width: 1; fill: none; }
.axis circle, .axis path { fill: none; stroke: #007000; stroke-width: 1; }
.lbl text { fill: #e8e8e8; font: 16px "DejaVu Sans", sans-serif; text-anchor: middle; }
.lbl .big { font-size: 17px; }
.gz { fill: #0080ff; font: 15px "DejaVu Sans", sans-serif; }
.gy { fill: #00c000; font: 14px "DejaVu Sans", sans-serif; }

/* status */
.status { height: 20px; flex: none; display: flex; overflow: hidden; background: #f0f2f7; }
.st1 { width: 415px; height: 22px; padding-left: 4px; gap: 2px; padding-top: 7px; }
.st2 { margin-left: 66px; padding-top: 7px; height: 22px; width: 320px; gap: 3px; }
.status .grip { margin-right: 3px; }
.c-s span { width: 44px; height: 19px; line-height: 20px; background: #f0f2f7; }
.c-s .cbtn { height: 19px; }
.dim2 { color: #666; white-space: nowrap; }
.num-in { width: 40px; text-align: right; padding-right: 2px; color: #777; background: #f8f8f8; height: 19px; line-height: 19px; flex: none; }
.n2 { width: 50px; }
.spin { width: 12px; height: 19px; flex: none; background: linear-gradient(#eee, #ddd); border: 1px solid #ccc; }
.s-x { margin-right: 3px; }
.s-y { margin-left: 6px; margin-right: 3px; }
.chk { width: 12px; height: 12px; flex: none; margin-left: 12px; border: 1px solid #777; background: #f4f4f4; }
.s-r { margin: 0 5px; white-space: nowrap; }
.st2 .tool { height: 20px; }
.st2 .tool.wg { gap: 6px; }
.st2 .tool.on { width: 52px; padding-left: 3px; }

/* dialog */
.dialog { position: absolute; left: 328px; top: 288px; width: 659px; height: 448px; border-radius: 6px 6px 5px 5px; padding: 0 5px 5px; border: 1px solid #d8d8d8; background:
  linear-gradient(90deg, #c4c8b8 0, #b4b9a8 170px, #30302c 190px, #a8c070 204px, #a8c070 226px, #808878 240px, #1e1e1c 280px, #1e1e1c 316px, #9ab866 330px, #9ab866 350px, #141414 366px, #101010 660px) top / 100% 30px no-repeat,
  linear-gradient(90deg, #a0a894 0, #c8d0b0 120px, #28282a 240px, #a8c070 330px, #181818 400px, #181818 560px, #a0b080 600px, #cdd4c0 660px) bottom / 100% 7px no-repeat,
  linear-gradient(#b8ceb0 0, #c8d8b0 170px, #30302c 250px, #141414 400px, #506040 448px); display: flex; flex-direction: column; box-shadow: 0 0 0 1px #555; }
.dtitle { height: 28px; flex: none; display: flex; align-items: center; position: relative; }
.dtitle svg { flex: none; }
.dtitle-t { margin-left: 5px; font-size: 12px; letter-spacing: .25px; color: #111; text-shadow: 0 0 4px #ddd; }
.wbtns { position: absolute; right: 0; top: 0; display: flex; height: 19px; width: 101px; border: 1px solid #555; border-top: 0; border-radius: 0 0 4px 4px; overflow: hidden; }
.wb { height: 18px; position: relative; background: linear-gradient(#8a8f92 0, #6a6f72 45%, #3a3f42 50%, #5a6064 100%); border-right: 1px solid #bbb; }
.wb-min { width: 27px; }
.wb-min::after { content: ""; position: absolute; left: 9px; top: 10px; width: 10px; height: 3px; background: #fff; }
.wb-max { width: 27px; }
.wb-max::after { content: ""; position: absolute; left: 9px; top: 4px; width: 10px; height: 8px; border: 2px solid #fff; border-top-width: 3px; }
.wb-close { flex: 1; border: 0; text-align: center; color: #fff; font: bold 13px/17px "Liberation Sans", sans-serif; background: linear-gradient(#e89a88 0, #d86a50 45%, #b83010 50%, #d06040 100%); }
.dbody { flex: 1; background: #f0f0f0; border: 1px solid #7f8a8a; display: flex; flex-direction: column; padding: 16px 10px 0 12px; }
.grp { margin: 0; padding: 0; border: 1px solid #d8e0ea; border-radius: 3px; min-width: 0; }
.grp legend { padding: 0; line-height: 14px; font-size: 12px; }
.d-top { display: flex; height: 61px; flex: none; }
.g-type { width: 188px; height: 52px; display: flex; gap: 9px; padding: 9px 0 0 11px; }
.g-type legend { margin-left: -5px; }
.radio { display: flex; align-items: center; gap: 4px; height: 16px; white-space: nowrap; }
.rd { flex: none; width: 12px; height: 12px; border-radius: 50%; border: 1px solid #999; background: radial-gradient(#f4f4f4, #c8c8c8); }
.rd-on { background: radial-gradient(#1a6fb0 0 3px, #eef 4px); border-color: #667; }
.d-sel { margin-left: 15px; flex: 1; display: flex; flex-direction: column; gap: 7px; margin-top: 4px; }
.d-selrow { display: flex; align-items: center; height: 20px; }
.d-sellab { width: 70px; flex: none; white-space: nowrap; }
.dd { flex: 1; height: 20px; line-height: 18px; padding-left: 3px; position: relative; border: 1px solid #888; border-radius: 3px; background: linear-gradient(#f4f4f4 0, #ececec 50%, #d8d8d8 51%, #e0e0e0 100%); }
.ddarrow { position: absolute; right: 4px; top: 8px; border: 4px solid transparent; border-top: 4px solid #111; border-bottom: 0; }
.g-calc { height: 173px; flex: none; padding: 5px 9px 0 8px; }
.g-calc legend { margin-left: -2px; }
.calcbox { height: 146px; display: flex; background: #fff; border: 1px solid #a8a8a8; }
.calctext { flex: 1; min-width: 0; padding: 2px 0 0 3px; overflow: hidden; }
.calctext p { margin: 0; line-height: 16px; text-indent: 23px; white-space: nowrap; }
.calctext b { letter-spacing: 1px; }
.scroll { width: 17px; flex: none; display: flex; flex-direction: column; align-items: center; background: #f4f4f4; }
.sb-up { margin-top: 9px; border: 4px solid transparent; border-bottom: 4px solid #555; border-top: 0; }
.sb-thumb { width: 14px; height: 66px; margin-top: 7px; border: 1px solid #aaa; border-radius: 2px; background-image: repeating-linear-gradient(#777 0 1px, transparent 1px 2px), linear-gradient(90deg, #f2f2f2, #d8d8d8); background-size: 8px 7px, 100% 100%; background-position: center; background-repeat: no-repeat; }
.sb-down { margin-top: 45px; border: 4px solid transparent; border-top: 4px solid #555; border-bottom: 0; }
.g-man { height: 100px; flex: none; margin-top: 16px; padding: 4px 9px 0 1px; }
.g-man legend { margin-left: 5px; }
.mantext { height: 44px; background: #fff; border: 1px solid #d0d0d8; border-top-color: #a8a8a8; }
.manrow { display: flex; align-items: center; margin-top: 7px; height: 23px; padding-left: 7px; }
.btn { font: inherit; padding: 0; height: 23px; border: 1px solid #707070; border-radius: 3px; background: linear-gradient(#f2f2f2 0, #ebebeb 48%, #dcdcdc 52%, #cfcfcf 100%); white-space: nowrap; color: #000; }
.b-re { width: 88px; flex: none; }
.manlab { margin-left: 23px; white-space: nowrap; flex: none; }
.manres { margin-left: 9px; flex: 1; height: 20px; background: #ffffe1; border: 1px solid #e0e4ec; }
.d-foot { display: flex; margin-top: 13px; height: 23px; }
.b-1 { width: 106px; }
.b-2 { width: 113px; margin-left: 18px; }
.b-3 { width: 108px; margin-left: 18px; }
.b-close { width: 73px; margin-left: auto; border-color: #3aa8dc; box-shadow: inset 0 0 0 1px #bfe8f8; }

/* red hand-drawn annotations */
.notes { position: absolute; left: 0; top: 0; pointer-events: none; }
.notes path { fill: none; stroke: #ff0000; stroke-width: 1; }
.notes polygon { fill: #ff0000; }
```
